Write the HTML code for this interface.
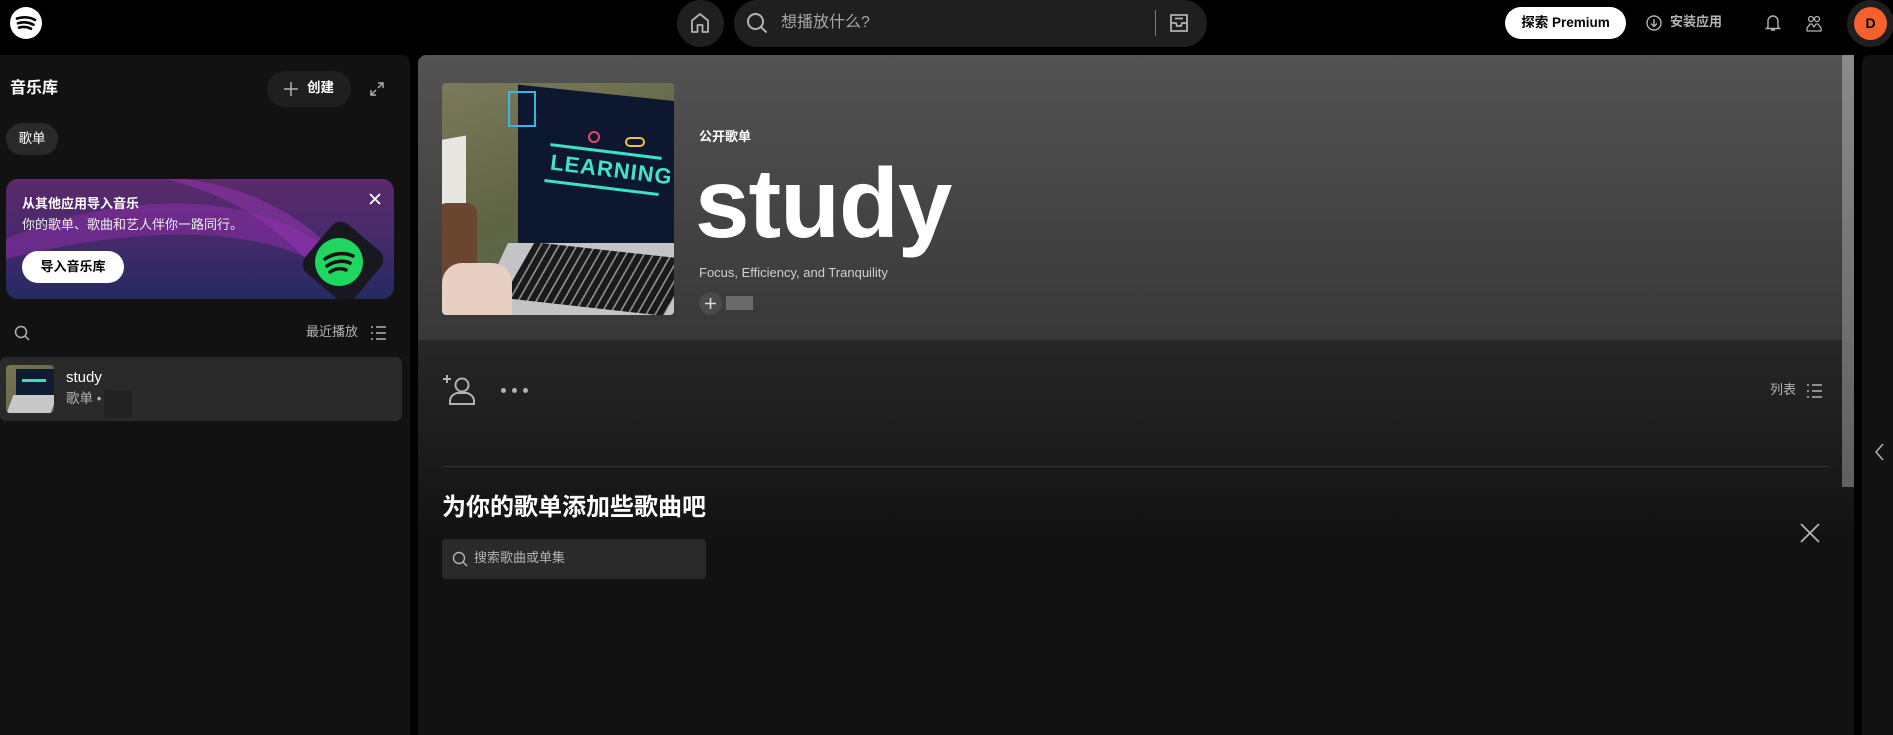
<!DOCTYPE html>
<html><head><meta charset="utf-8"><style>
*{margin:0;padding:0;box-sizing:border-box}
body{width:1893px;height:714px;background:#000;overflow:hidden;position:relative;font-family:"Liberation Sans","Noto Sans CJK SC",sans-serif;color:#fff;line-height:1.2}
.a{position:absolute}
</style></head><body>
<!-- top bar -->
<svg class="a" style="left:10px;top:7px" width="32" height="32" viewBox="0 0 32 32"><circle cx="16" cy="16" r="16" fill="#fff"/><path d="M7 11.5c6-2 13-1.5 18 1.5M8 16.2c5-1.5 11-1 15.5 1.5M9 20.6c4-1.1 8.5-.8 12 1.2" stroke="#000" stroke-width="2.6" fill="none" stroke-linecap="round"/></svg>
<div class="a" style="left:677px;top:0;width:47px;height:47px;border-radius:50%;background:#1f1f1f"></div>
<svg class="a" style="left:688px;top:11px" width="24" height="24" viewBox="0 0 24 24"><path d="M4 21V9.5L12 3l8 6.5V21h-5.5v-7h-5v7z" fill="none" stroke="#b3b3b3" stroke-width="1.8" stroke-linejoin="round"/></svg>
<div class="a" style="left:734px;top:0;width:473px;height:47px;border-radius:24px;background:#1f1f1f"></div>
<svg class="a" style="left:745px;top:11px" width="24" height="24" viewBox="0 0 24 24"><circle cx="10.5" cy="10.5" r="7.5" fill="none" stroke="#b3b3b3" stroke-width="2"/><path d="M16 16l5.5 5.5" stroke="#b3b3b3" stroke-width="2"/></svg>
<div class="a" style="left:781px;top:13px;font-size:16px;color:#a7a7a7">想播放什么?</div>
<div class="a" style="left:1155px;top:10px;width:1px;height:26px;background:#7a7a7a"></div>
<svg class="a" style="left:1167px;top:11px" width="24" height="24" viewBox="0 0 24 24"><path d="M4 4h16v16H4zM4 12h5l1 3h4l1-3h5M8 7.5h8" fill="none" stroke="#b3b3b3" stroke-width="1.8"/></svg>
<div class="a" style="left:1505px;top:7px;width:121px;height:32px;border-radius:16px;background:#fff;color:#000;font-weight:bold;font-size:13.5px;line-height:32px;text-align:center">探索 Premium</div>
<svg class="a" style="left:1646px;top:15px" width="16" height="16" viewBox="0 0 16 16"><circle cx="8" cy="8" r="7" fill="none" stroke="#b3b3b3" stroke-width="1.4"/><path d="M8 4v7M5 8.5l3 3 3-3" fill="none" stroke="#b3b3b3" stroke-width="1.4"/></svg>
<div class="a" style="left:1670px;top:14px;font-size:13px;font-weight:bold;color:#b3b3b3">安装应用</div>
<svg class="a" style="left:1765px;top:14px" width="16" height="18" viewBox="0 0 16 18"><path d="M3 13V7a5 5 0 0110 0v6l1.5 1.5h-13z M6 16h4" fill="none" stroke="#b3b3b3" stroke-width="1.4"/></svg>
<svg class="a" style="left:1805px;top:14px" width="18" height="18" viewBox="0 0 18 18"><circle cx="6" cy="5" r="2.5" fill="none" stroke="#b3b3b3" stroke-width="1.3"/><circle cx="12" cy="5" r="2.5" fill="none" stroke="#b3b3b3" stroke-width="1.3"/><path d="M2 17v-3l3-4h2l2 3 2-3h2l3 4v3z" fill="none" stroke="#b3b3b3" stroke-width="1.3"/></svg>
<div class="a" style="left:1847px;top:0;width:47px;height:47px;border-radius:50%;background:#1f1f1f"></div>
<div class="a" style="left:1854px;top:7px;width:33px;height:33px;border-radius:50%;background:#f5602d;color:#000;font-weight:bold;font-size:14px;line-height:33px;text-align:center">D</div>

<!-- sidebar -->
<div class="a" style="left:0;top:55px;width:410px;height:680px;background:#121212;border-radius:0 8px 0 0"></div>
<div class="a" style="left:10px;top:79px;font-size:16px;font-weight:bold">音乐库</div>
<div class="a" style="left:267px;top:71px;width:84px;height:36px;border-radius:18px;background:#1f1f1f"></div>
<svg class="a" style="left:283px;top:81px" width="16" height="16" viewBox="0 0 16 16"><path d="M8 1v14M1 8h14" stroke="#b3b3b3" stroke-width="1.5"/></svg>
<div class="a" style="left:307px;top:80px;font-size:13.5px;font-weight:bold">创建</div>
<svg class="a" style="left:370px;top:82px" width="14" height="14" viewBox="0 0 14 14"><path d="M8 1h5v5M13 1L8 6M6 13H1V8M1 13l5-5" fill="none" stroke="#b3b3b3" stroke-width="1.4"/></svg>
<div class="a" style="left:6px;top:123px;width:52px;height:32px;border-radius:16px;background:#2a2a2a;font-size:13.5px;line-height:32px;text-align:center">歌单</div>
<div class="a" style="left:6px;top:179px;width:388px;height:120px;border-radius:12px;overflow:hidden;background:linear-gradient(180deg,#5b2a6c 0%,#452a6a 50%,#252a62 100%)">
<svg width="388" height="120" style="position:absolute;left:0;top:0"><path d="M0 60 C120 10 250 10 330 75 L330 95 C250 40 120 50 0 80Z" fill="#8a2ca6" opacity=".55"/><path d="M180 0 C250 10 300 40 330 75 L300 80 C260 40 220 15 160 0Z" fill="#9a34b6" opacity=".5"/></svg>
<div class="a" style="left:16px;top:17px;font-size:13px;font-weight:bold">从其他应用导入音乐</div>
<div class="a" style="left:16px;top:38px;font-size:13px;color:#eee">你的歌单、歌曲和艺人伴你一路同行。</div>
<div class="a" style="left:16px;top:72px;width:102px;height:32px;border-radius:16px;background:#fff;color:#000;font-size:13px;font-weight:bold;line-height:32px;text-align:center">导入音乐库</div>
<svg class="a" style="left:362px;top:13px" width="14" height="14"><path d="M2 2l10 10M12 2L2 12" stroke="#fff" stroke-width="1.8"/></svg>
<div class="a" style="left:305px;top:51px;width:64px;height:64px;border-radius:12px;background:#181820;transform:rotate(40deg)"></div>
<svg class="a" style="left:308px;top:58px" width="50" height="50" viewBox="0 0 50 50"><circle cx="25" cy="25" r="24" fill="#1ed760"/><path d="M11 22c8-6 20-7 28-3M13 29c7-5 16-6 23-3M16 35c5-3.5 11-4.5 16-2" stroke="#111" stroke-width="3.5" fill="none" stroke-linecap="round"/></svg>
</div>
<svg class="a" style="left:14px;top:325px" width="16" height="16" viewBox="0 0 16 16"><circle cx="7" cy="7" r="5.5" fill="none" stroke="#b3b3b3" stroke-width="1.5"/><path d="M11 11l4 4" stroke="#b3b3b3" stroke-width="1.5"/></svg>
<div class="a" style="left:306px;top:324px;font-size:13px;color:#b3b3b3">最近播放</div>
<svg class="a" style="left:371px;top:326px" width="15" height="14"><path d="M0 1h2M0 7h2M0 13h2M5 1h10M5 7h10M5 13h10" stroke="#b3b3b3" stroke-width="1.5"/></svg>
<div class="a" style="left:0;top:357px;width:402px;height:64px;border-radius:6px;background:#2a2a2a"></div>
<div class="a" style="left:6px;top:365px;width:48px;height:48px;border-radius:4px;overflow:hidden;background:linear-gradient(135deg,#7a7555,#5a6040)"><div class="a" style="left:10px;top:4px;width:38px;height:26px;background:#0e1b30"></div><div class="a" style="left:16px;top:14px;width:24px;height:3px;background:#40d8c0"></div><div class="a" style="left:4px;top:30px;width:44px;height:18px;background:#c8c8c8;transform:skewX(-20deg)"></div></div>
<div class="a" style="left:66px;top:369px;font-size:15px">study</div>
<div class="a" style="left:66px;top:391px;font-size:13.5px;color:#b3b3b3">歌单 •</div>
<div class="a" style="left:104px;top:390px;width:28px;height:28px;background:#222;border-radius:3px"></div>

<!-- main -->
<div class="a" style="left:418px;top:55px;width:1436px;height:680px;border-radius:8px 8px 0 0;overflow:hidden;background:#121212">
<div class="a" style="left:0;top:0;width:1436px;height:285px;background:linear-gradient(180deg,#535353,#383838)"></div>
<div class="a" style="left:0;top:285px;width:1436px;height:200px;background:linear-gradient(180deg,#272727,#121212)"></div>
</div>
<div class="a" style="left:1842px;top:55px;width:12px;height:432px;background:linear-gradient(180deg,#8a8a8a,#5f5f5f)"></div>
<!-- art -->
<div class="a" style="left:442px;top:83px;width:232px;height:232px;border-radius:4px;overflow:hidden;background:linear-gradient(160deg,#7b7a5a,#5e6444 50%,#55704f)">
<div class="a" style="left:-4px;top:55px;width:28px;height:120px;background:#e8e6e0;transform:skewY(-10deg)"></div>
<div class="a" style="left:-5px;top:120px;width:40px;height:80px;background:#6a4530;border-radius:10px"></div>
<div class="a" style="left:76px;top:10px;width:160px;height:160px;background:#0d1830;transform:skewY(6deg)"></div>
<div class="a" style="left:108px;top:67px;width:112px;height:3px;background:#3fe0c8;transform:rotate(7deg)"></div>
<div class="a" style="left:108px;top:74px;font:bold 22px 'Liberation Sans',sans-serif;color:#45e2c8;transform:rotate(7deg);letter-spacing:1px">LEARNING</div>
<div class="a" style="left:102px;top:103px;width:115px;height:3px;background:#3fe0c8;transform:rotate(7deg)"></div>
<div class="a" style="left:146px;top:48px;width:12px;height:12px;border:2px solid #e84860;border-radius:50%"></div>
<div class="a" style="left:183px;top:54px;width:20px;height:10px;border:2px solid #f0c040;border-radius:6px"></div>
<div class="a" style="left:66px;top:8px;width:28px;height:36px;border:2px solid #38b8e0"></div>
<div class="a" style="left:45px;top:160px;width:200px;height:90px;background:#c4c4c6;transform:skewX(-25deg)"></div>
<div class="a" style="left:72px;top:168px;width:170px;height:56px;background:repeating-linear-gradient(90deg,#1a1a1a 0 7px,#888 7px 9px);transform:skewX(-25deg) rotate(6deg)"></div>
<div class="a" style="left:0;top:180px;width:70px;height:60px;background:#e8cfc4;border-radius:20px 20px 0 0"></div>
</div>
<div class="a" style="left:699px;top:129px;font-size:13px;font-weight:bold">公开歌单</div>
<div class="a" style="left:695px;top:148px;font-size:98px;font-weight:bold;letter-spacing:-1px;line-height:110px">study</div>
<div class="a" style="left:699px;top:265px;font-size:13px;color:#d0d0d0">Focus, Efficiency, and Tranquility</div>
<div class="a" style="left:699px;top:292px;width:23px;height:23px;border-radius:50%;background:#4a4a4a"></div>
<svg class="a" style="left:704px;top:297px" width="13" height="13"><path d="M6.5 1v11M1 6.5h11" stroke="#ddd" stroke-width="1.6"/></svg>
<div class="a" style="left:726px;top:296px;width:27px;height:14px;background:#6a6a6a"></div>
<!-- actions -->
<svg class="a" style="left:442px;top:374px" width="34" height="32" viewBox="0 0 34 32"><path d="M5 1v8M1 5h8" stroke="#b3b3b3" stroke-width="2"/><circle cx="20" cy="11" r="6.5" fill="none" stroke="#b3b3b3" stroke-width="2"/><path d="M8 30v-3c0-5 5-8 8-8h8c3 0 8 3 8 8v3z" fill="none" stroke="#b3b3b3" stroke-width="2"/></svg>
<div class="a" style="left:501px;top:388px;width:5px;height:5px;border-radius:50%;background:#b3b3b3;box-shadow:11px 0 #b3b3b3,22px 0 #b3b3b3"></div>
<div class="a" style="left:1770px;top:382px;font-size:13px;color:#b3b3b3">列表</div>
<svg class="a" style="left:1807px;top:384px" width="15" height="14"><path d="M0 1h2M0 7h2M0 13h2M5 1h10M5 7h10M5 13h10" stroke="#b3b3b3" stroke-width="1.5"/></svg>
<div class="a" style="left:442px;top:466px;width:1388px;height:1px;background:#333"></div>
<div class="a" style="left:442px;top:494px;font-size:24px;font-weight:bold">为你的歌单添加些歌曲吧</div>
<div class="a" style="left:442px;top:539px;width:264px;height:40px;border-radius:4px;background:#2a2a2a"></div>
<svg class="a" style="left:452px;top:551px" width="16" height="16" viewBox="0 0 16 16"><circle cx="7" cy="7" r="5.5" fill="none" stroke="#b3b3b3" stroke-width="1.4"/><path d="M11 11l4 4" stroke="#b3b3b3" stroke-width="1.4"/></svg>
<div class="a" style="left:474px;top:550px;font-size:13px;color:#b3b3b3">搜索歌曲或单集</div>
<svg class="a" style="left:1800px;top:523px" width="20" height="20"><path d="M1 1l18 18M19 1L1 19" stroke="#b3b3b3" stroke-width="1.8"/></svg>
<!-- right panel -->
<div class="a" style="left:1862px;top:55px;width:40px;height:680px;background:#121212;border-radius:8px 0 0 0"></div>
<svg class="a" style="left:1875px;top:443px" width="10" height="18"><path d="M8 1L1 9l7 8" fill="none" stroke="#b3b3b3" stroke-width="1.5"/></svg>
</body></html>
